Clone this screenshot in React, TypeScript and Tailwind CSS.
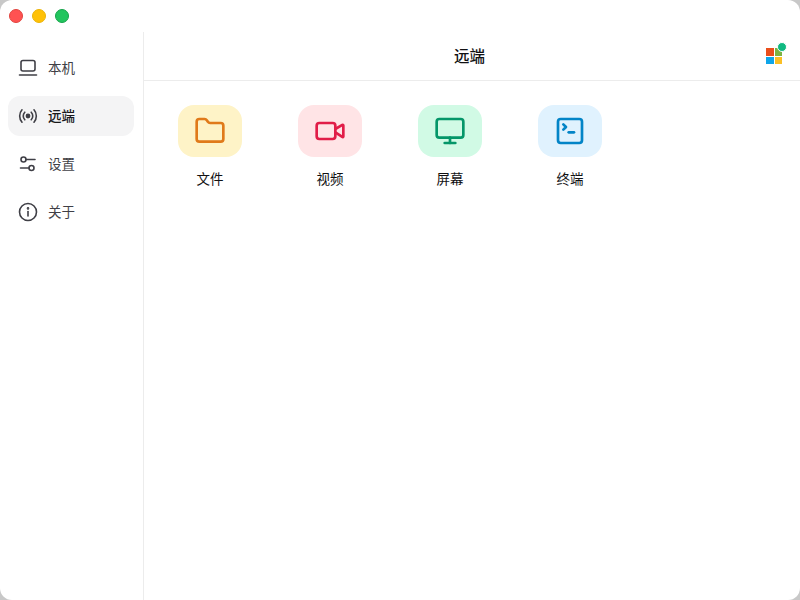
import { Folder, Monitor, SquareTerminal, Video } from 'lucide-react'
import type { ReactNode } from 'react'

function NavIcon({ children }: { children: ReactNode }) {
  return (
    <svg viewBox="0 0 20 20" fill="none" stroke="currentColor" strokeWidth="1.6" strokeLinecap="round" strokeLinejoin="round" className="h-5 w-5 shrink-0 text-[#3f3f46]">
      {children}
    </svg>
  )
}

const navItems = [
  {
    label: '本机',
    icon: (
      <NavIcon>
        <rect x="3" y="2.5" width="14" height="10.5" rx="2" />
        <path d="M1.5 17h17" />
      </NavIcon>
    ),
  },
  {
    label: '远端',
    active: true,
    icon: (
      <NavIcon>
        <circle cx="10" cy="10" r="1.6" fill="currentColor" />
        <path d="M6.8 6.2a5.4 5.4 0 0 0 0 7.6M13.2 6.2a5.4 5.4 0 0 1 0 7.6" />
        <path d="M4 3.8a9.4 9.4 0 0 0 0 12.4M16 3.8a9.4 9.4 0 0 1 0 12.4" />
      </NavIcon>
    ),
  },
  {
    label: '设置',
    icon: (
      <NavIcon>
        <circle cx="5.5" cy="5.5" r="2.5" />
        <circle cx="13.5" cy="14" r="2.5" />
        <path d="M8 5.5h9M2.5 14H11" />
      </NavIcon>
    ),
  },
  {
    label: '关于',
    icon: (
      <NavIcon>
        <circle cx="10" cy="10" r="8.5" />
        <path d="M10 9.5v4.5" />
        <circle cx="10" cy="6.4" r="0.5" fill="currentColor" />
      </NavIcon>
    ),
  },
]

const tiles = [
  { label: '文件', icon: Folder, tile: 'bg-[#fef3c7]', color: 'text-[#e07a1a]' },
  { label: '视频', icon: Video, tile: 'bg-[#ffe4e6]', color: 'text-[#e11d48]' },
  { label: '屏幕', icon: Monitor, tile: 'bg-[#d1fae5]', color: 'text-[#059669]' },
  { label: '终端', icon: SquareTerminal, tile: 'bg-[#e0f2fe]', color: 'text-[#0284c7]' },
]

export default function App() {
  return (
    <div className="h-[600px] w-[800px] bg-[#c8c8c8] font-['Noto_Sans_CJK_SC','Noto_Sans',sans-serif]">
      <div className="flex h-full flex-col overflow-hidden rounded-xl bg-white">
        {/* Traffic lights */}
        <div className="flex h-8 shrink-0 items-center gap-[9px] pl-[9px]">
          <span className="h-3.5 w-3.5 rounded-full border border-[#e0443e] bg-[#ff5252]" />
          <span className="h-3.5 w-3.5 rounded-full border border-[#eab308] bg-[#ffc107]" />
          <span className="h-3.5 w-3.5 rounded-full border border-[#16a34a] bg-[#22c55e]" />
        </div>

        <div className="flex min-h-0 flex-1">
          {/* Sidebar */}
          <aside className="flex w-[144px] shrink-0 flex-col gap-2 border-r border-[#ececec] pl-2 pr-[9px] pt-4">
            {navItems.map((item) => (
              <div
                key={item.label}
                className={`flex h-10 items-center gap-[10px] rounded-xl pl-[10px] text-[13.5px] ${
                  item.active ? 'bg-[#f4f4f5] font-medium text-[#18181b]' : 'text-[#3f3f46]'
                }`}
              >
                {item.icon}
                <span className="-translate-y-px">{item.label}</span>
              </div>
            ))}
          </aside>

          {/* Main */}
          <main className="min-w-0 flex-1">
            <header className="relative flex h-[49px] items-center justify-center border-b border-[#ececec] pr-[5px]">
              <h1 className="text-[15.5px] font-medium text-[#111113]">远端</h1>
              <div className="absolute right-[18px] top-[16px] grid h-4 w-4 grid-cols-2 gap-px">
                <span className="bg-[#ea4e1b]" />
                <span className="bg-[#7cb342]" />
                <span className="bg-[#0ea5e9]" />
                <span className="bg-[#fbbf24]" />
              </div>
              <span className="absolute right-[13px] top-[10px] h-2.5 w-2.5 rounded-full border border-white bg-[#10b981]" />
            </header>

            <div className="flex gap-14 pl-[34px] pt-6">
              {tiles.map((t) => (
                <div key={t.label} className="flex w-16 flex-col items-center gap-3">
                  <div className={`flex h-[52px] w-16 items-center justify-center rounded-2xl ${t.tile}`}>
                    <t.icon size={32} strokeWidth={2} className={t.color} />
                  </div>
                  <span className="text-[13.5px] leading-[18px] text-[#111113]">{t.label}</span>
                </div>
              ))}
            </div>
          </main>
        </div>
      </div>
    </div>
  )
}
